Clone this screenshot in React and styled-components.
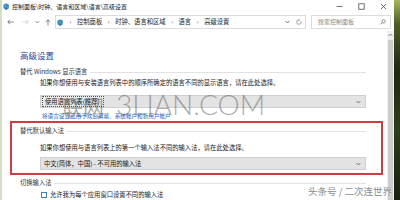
import React from "react";
import styled, { createGlobalStyle } from "styled-components";

const GlobalStyle = createGlobalStyle`
  html, body { margin: 0; padding: 0; width: 400px; height: 200px; overflow: hidden; background: #fff; }
  body { font-family: "Noto Sans CJK SC", "Noto Sans", sans-serif; color: #1a1a1a; }
  * { box-sizing: border-box; }
`;

const Screen = styled.div`
  position: relative;
  display: flex;
  width: 400px;
  height: 200px;
  overflow: hidden;
`;

const LeftEdge = styled.div`
  width: 2px;
  background: #d4e0c4;
`;

const Desktop = styled.div`
  width: 6px;
  background: linear-gradient(#a7b85a 0%, #4a5e24 12%, #1c2611 35%, #2d3e19 65%, #172010 100%);
`;

const Window = styled.div`
  flex: 1;
  min-width: 0;
  display: flex;
  flex-direction: column;
  background: #fff;
`;

const TitleBar = styled.div`
  height: 13px;
  display: flex;
  align-items: center;
  padding-left: 1px;
`;

const TitleText = styled.span`
  font-size: 6px;
  line-height: 8px;
  margin-left: 2px;
  color: #222;
  white-space: nowrap;
`;

const Spacer = styled.div`
  flex: 1;
`;

const Control = styled.div`
  width: 22px;
  height: 13px;
  display: flex;
  align-items: center;
  justify-content: center;
  color: #333;
`;

const AddressRow = styled.div`
  height: 18px;
  display: flex;
  align-items: center;
  padding-left: 2px;
`;

const NavButton = styled.div`
  width: ${(p) => p.$w}px;
  height: 14px;
  display: flex;
  align-items: center;
  justify-content: center;
`;

const AddressBox = styled.div`
  width: 251px;
  height: 14px;
  border: 1px solid #dcdcdc;
  display: flex;
  align-items: center;
  padding-left: 1px;
`;

const Crumb = styled.span`
  font-size: 6.3px;
  line-height: 8px;
  color: #222;
  white-space: nowrap;
`;

const Sep = styled.span`
  width: 13px;
  flex-shrink: 0;
  text-align: center;
  font-size: 6px;
  line-height: 8px;
  color: #555;
`;

const BoxButton = styled.div`
  width: ${(p) => p.$w}px;
  height: 12px;
  display: flex;
  align-items: center;
  justify-content: center;
  margin-left: ${(p) => p.$ml || 0}px;
`;

const SearchBox = styled.div`
  width: 80px;
  height: 14px;
  margin-left: 5px;
  border: 1px solid #dcdcdc;
  display: flex;
  align-items: center;
  padding: 0 4px 0 6px;
`;

const SearchText = styled.span`
  flex: 1;
  font-size: 6px;
  line-height: 8px;
  color: #8a8a8a;
`;

const Body = styled.div`
  flex: 1;
  min-height: 0;
  display: flex;
`;

const Content = styled.div`
  flex: 1;
  min-width: 0;
  display: flex;
  flex-direction: column;
`;

const Scrollbar = styled.div`
  width: 7px;
  background: #f0f0f0;
  display: flex;
  flex-direction: column;
  align-items: center;
`;

const ScrollArrow = styled.div`
  height: 8px;
  display: flex;
  align-items: center;
  justify-content: center;
`;

const Thumb = styled.div`
  margin-top: 1px;
  width: 5px;
  flex: 1;
  background: #cdcdcd;
`;

const Heading = styled.div`
  margin: 19px 0 0 18px;
  font-size: 8.5px;
  line-height: 10px;
  color: #26489a;
`;

const Section = styled.div`
  padding: 0 21px 0 18px;
  margin-top: ${(p) => p.$mt || 0}px;
  display: flex;
  flex-direction: column;
`;

const GroupHeader = styled.div`
  display: flex;
  align-items: center;
  font-size: 6.3px;
  line-height: 8px;
  color: #333;
  white-space: nowrap;
  &::after {
    content: "";
    flex: 1;
    height: 1px;
    margin-left: 3px;
    background: #e2e2e2;
  }
`;

const Para = styled.div`
  margin: ${(p) => p.$mt}px 0 0 20px;
  font-size: 6.3px;
  line-height: 8px;
  color: #1a1a1a;
  white-space: nowrap;
`;

const Select = styled.div`
  margin: ${(p) => p.$mt}px 0 0 20px;
  height: 13px;
  background: #e3e3e3;
  border: 1px solid #cfcfcf;
  display: flex;
  align-items: center;
  padding: 0 4px 0 1px;
`;

const SelectText = styled.span`
  flex: 1;
  font-size: 6.3px;
  line-height: 9px;
  color: #1a1a1a;
  white-space: nowrap;
  padding-left: 2px;
`;

const FocusText = styled.span`
  font-size: 6.3px;
  line-height: 9px;
  padding: 0 3px 0 2px;
  border: 1px dotted #555;
  background: #e9e9e9;
  white-space: nowrap;
`;

const Link = styled.div`
  margin: 4px 0 0 22px;
  font-size: 5.6px;
  line-height: 8px;
  color: #1a5fc4;
  white-space: nowrap;
`;

const RedBox = styled.div`
  margin: 1px 4px 0 8px;
  border: 2px solid #cf3d43;
  padding: 4px 15px 3px 8px;
  display: flex;
  flex-direction: column;
`;

const CheckRow = styled.div`
  margin: 4px 0 0 21px;
  display: flex;
  align-items: center;
  font-size: 6.3px;
  line-height: 8px;
  white-space: nowrap;
`;

const Box = styled.span`
  width: 6px;
  height: 6px;
  border: 1px solid #3f7fbf;
  background: #fff;
  margin-right: 3px;
`;

const Watermark = styled.div`
  position: absolute;
  z-index: 5;
  left: 62px;
  top: 87px;
  display: flex;
  align-items: baseline;
  color: rgba(90, 90, 90, 0.5);
  pointer-events: none;
  white-space: nowrap;
`;

const WmCjk = styled.span`
  font-family: "Noto Sans CJK SC", "Noto Sans CJK JP", sans-serif;
  font-weight: 400;
  font-size: 21px;
  margin-right: 12px;
`;

const WmLatin = styled.span`
  font-family: "Lato", "DejaVu Sans", sans-serif;
  font-weight: 300;
  font-size: 28px;
`;

const Credit = styled.div`
  position: absolute;
  right: 8px;
  bottom: 3px;
  font-size: 9.5px;
  line-height: 11px;
  color: #8c8c8c;
  text-shadow: 0 0 2px #fff;
  white-space: nowrap;
  pointer-events: none;
`;

const CpIcon = () => (
  <svg width="7" height="7" viewBox="0 0 7 7">
    <circle cx="3.2" cy="3.4" r="2.9" fill="#3b8ad8" />
    <path d="M1.2 2.2 L3 1.4 L3.6 3 L2.2 4.2 Z" fill="#5fb04a" />
    <path d="M4.2 4 L6 3.6 L5.4 5.6 Z" fill="#7cc256" />
    <rect x="2.6" y="5.2" width="1.4" height="1.6" fill="#2e6db3" />
  </svg>
);

const Chevron = ({ color = "#555" }) => (
  <svg width="5" height="4" viewBox="0 0 5 4">
    <path d="M0.6 1 L2.5 3 L4.4 1" fill="none" stroke={color} strokeWidth="0.8" />
  </svg>
);

export default function App() {
  return (
    <>
      <GlobalStyle />
      <Screen>
        <LeftEdge />
        <Window>
          <TitleBar>
            <CpIcon />
            <TitleText>控制面板\时钟、语言和区域\语言\高级设置</TitleText>
            <Spacer />
            <Control>
              <svg width="7" height="7" viewBox="0 0 7 7"><path d="M0.5 3.5 H6.5" stroke="#333" strokeWidth="0.7" /></svg>
            </Control>
            <Control>
              <svg width="7" height="7" viewBox="0 0 7 7"><rect x="0.8" y="0.8" width="5.4" height="5.4" fill="none" stroke="#333" strokeWidth="0.7" /></svg>
            </Control>
            <Control>
              <svg width="7" height="7" viewBox="0 0 7 7"><path d="M1 1 L6 6 M6 1 L1 6" stroke="#333" strokeWidth="0.7" /></svg>
            </Control>
          </TitleBar>
          <AddressRow>
            <NavButton $w={12}>
              <svg width="7" height="6" viewBox="0 0 7 6"><path d="M6.5 3 H0.8 M3 0.8 L0.8 3 L3 5.2" fill="none" stroke="#555" strokeWidth="0.7" /></svg>
            </NavButton>
            <NavButton $w={18}>
              <svg width="7" height="6" viewBox="0 0 7 6"><path d="M0.5 3 H6.2 M4 0.8 L6.2 3 L4 5.2" fill="none" stroke="#c4c4c4" strokeWidth="0.7" /></svg>
            </NavButton>
            <NavButton $w={6}>
              <Chevron color="#777" />
            </NavButton>
            <NavButton $w={15}>
              <svg width="6" height="7" viewBox="0 0 6 7"><path d="M3 6.5 V0.8 M0.8 3 L3 0.8 L5.2 3" fill="none" stroke="#555" strokeWidth="0.7" /></svg>
            </NavButton>
            <AddressBox>
              <CpIcon />
              <Sep>›</Sep>
              <Crumb>控制面板</Crumb>
              <Sep>›</Sep>
              <Crumb>时钟、语言和区域</Crumb>
              <Sep>›</Sep>
              <Crumb>语言</Crumb>
              <Sep>›</Sep>
              <Crumb>高级设置</Crumb>
              <Spacer />
              <BoxButton $w={8}>
                <Chevron />
              </BoxButton>
              <BoxButton $w={12} $ml={2}>
                <svg width="6" height="6" viewBox="0 0 6 6"><path d="M4.8 2 A2.2 2.2 0 1 1 3 0.9" fill="none" stroke="#666" strokeWidth="0.6" /><path d="M2.6 0.2 L3.6 0.9 L2.7 1.7" fill="none" stroke="#666" strokeWidth="0.6" /></svg>
              </BoxButton>
            </AddressBox>
            <SearchBox>
              <SearchText>搜索控制面板</SearchText>
              <svg width="6" height="6" viewBox="0 0 6 6"><circle cx="3.6" cy="2.4" r="1.7" fill="none" stroke="#555" strokeWidth="0.6" /><path d="M2.4 3.6 L0.6 5.4" stroke="#555" strokeWidth="0.7" /></svg>
            </SearchBox>
          </AddressRow>
          <Body>
            <Content>
              <Heading>高级设置</Heading>
              <Section $mt={8}>
                <GroupHeader>替代 Windows 显示语言</GroupHeader>
                <Para $mt={3}>如果你想使用与安装语言列表中的顺序所确定的语言不同的显示语言，请在此处选择。</Para>
                <Select $mt={8}>
                  <FocusText>使用语言列表(推荐)</FocusText>
                  <Spacer />
                  <Chevron />
                </Select>
                <Link>将语言设置应用于欢迎屏幕、系统帐户和新用户帐户</Link>
              </Section>
              <RedBox>
                <GroupHeader>替代默认输入法</GroupHeader>
                <Para $mt={9}>如果你想使用与语言列表上的第一个输入法不同的输入法，请在此处选择。</Para>
                <Select $mt={5}>
                  <SelectText>中文(简体，中国) - 不可用的输入法</SelectText>
                  <Chevron />
                </Select>
              </RedBox>
              <Section $mt={4}>
                <GroupHeader>切换输入法</GroupHeader>
                <CheckRow>
                  <Box />
                  允许我为每个应用窗口设置不同的输入法
                </CheckRow>
              </Section>
            </Content>
            <Scrollbar>
              <ScrollArrow>
                <svg width="5" height="4" viewBox="0 0 5 4"><path d="M0.6 3 L2.5 1 L4.4 3" fill="none" stroke="#666" strokeWidth="0.8" /></svg>
              </ScrollArrow>
              <Thumb />
            </Scrollbar>
          </Body>
        </Window>
        <Desktop />
        <Watermark>
          <WmCjk>联网</WmCjk>
          <WmLatin>3LIAN.COM</WmLatin>
        </Watermark>
        <Credit>头条号 / 二次连世界</Credit>
      </Screen>
    </>
  );
}
